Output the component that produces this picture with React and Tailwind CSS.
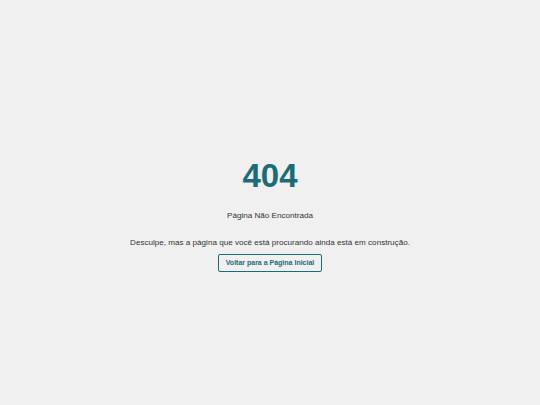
export default function App() {
  return (
    <div className="min-h-screen bg-[#f0f0f0] flex flex-col items-center justify-center pt-[26px] text-center" style={{ fontFamily: '"Liberation Sans", Arial, sans-serif' }}>
      <h1 className="text-[33px] leading-none font-bold text-[#1b6b78]">404</h1>
      <p className="mt-[18px] text-[8.1px] text-[#333]">Página Não Encontrada</p>
      <p className="mt-[15px] text-[8.1px] text-[#333]">Desculpe, mas a página que você está procurando ainda está em construção.</p>
      <button type="button" className="mt-[5px] h-[18px] px-[7px] border border-[#1b6b78] rounded-[2px] text-[7px] font-bold text-[#1b6b78] bg-transparent">
        Voltar para a Página Inicial
      </button>
    </div>
  );
}
